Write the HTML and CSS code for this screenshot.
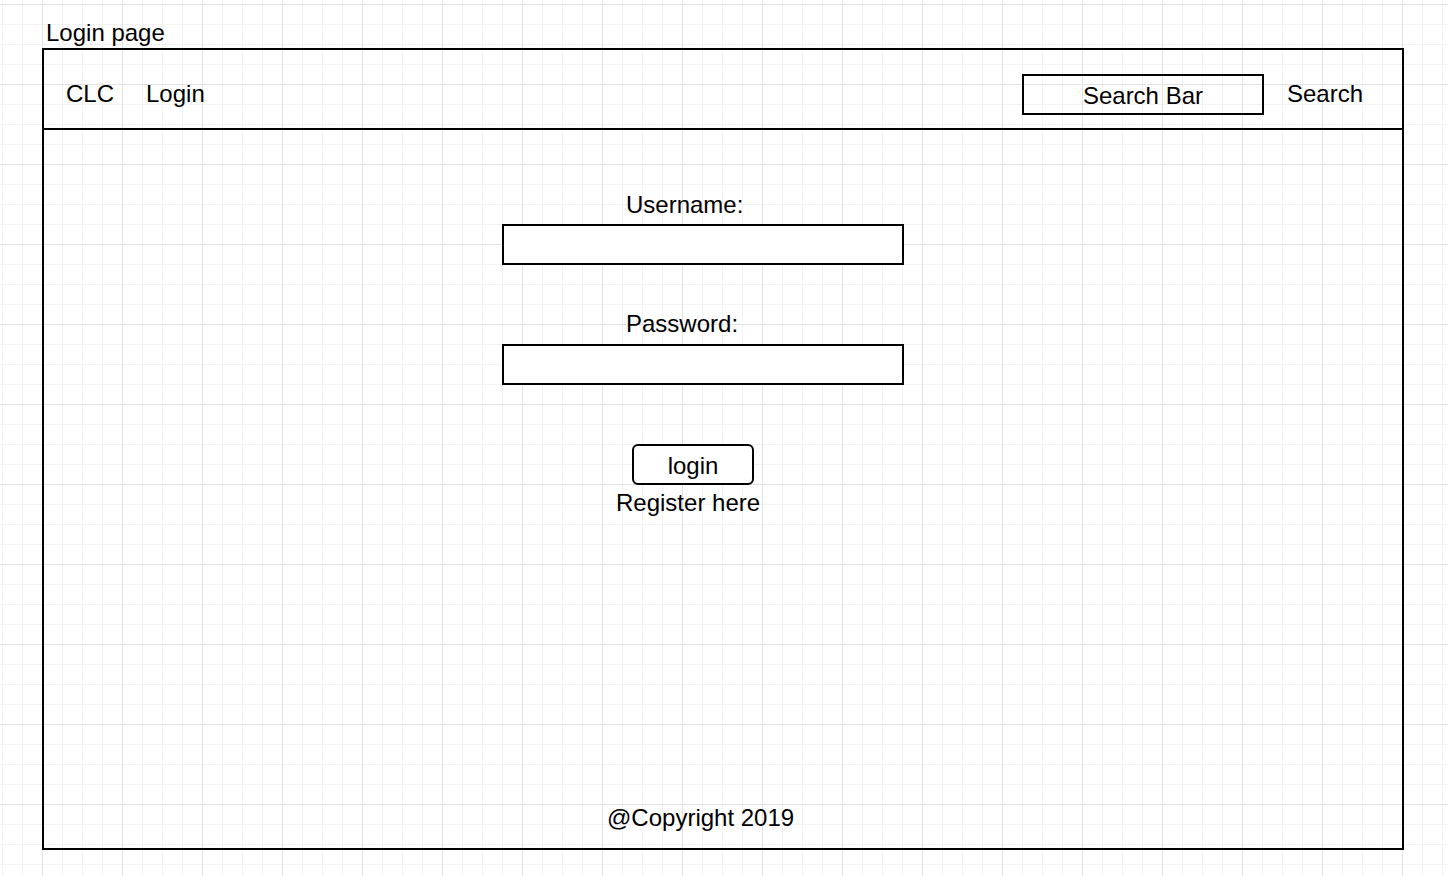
FILE: index.html
```html
<!DOCTYPE html>
<html lang="en">
<head>
<meta charset="utf-8">
<title>Login page</title>
<link rel="stylesheet" href="styles.css">
</head>
<body>
<div class="page">
  <div class="page-title">Login page</div>
  <div class="frame">
    <header class="topbar">
      <span class="brand">CLC</span>
      <span class="nav-link">Login</span>
      <div class="search-bar">Search Bar</div>
      <span class="search-link">Search</span>
    </header>
    <main class="content">
      <div class="field-label">Username:</div>
      <div class="field-box"></div>
      <div class="field-label field-label-second">Password:</div>
      <div class="field-box field-box-second"></div>
      <div class="login-button">login</div>
      <div class="register">Register here</div>
    </main>
    <footer class="footer">@Copyright 2019</footer>
  </div>
</div>
</body>
</html>
```

FILE: styles.css
```css
html, body {
  margin: 0;
  padding: 0;
}

body {
  width: 1448px;
  height: 876px;
  overflow: hidden;
  font-family: "Liberation Sans", Arial, Helvetica, sans-serif;
  font-size: 24px;
  line-height: 28px;
  color: #000;
  background-color: #ffffff;
  background-image:
    linear-gradient(to right, #e2e2e2 1px, transparent 1px),
    linear-gradient(to bottom, #e2e2e2 1px, transparent 1px),
    linear-gradient(to right, #f3f3f3 1px, transparent 1px),
    linear-gradient(to bottom, #f3f3f3 1px, transparent 1px);
  background-size: 80px 80px, 80px 80px, 20px 20px, 20px 20px;
  background-position: 42px 4px, 42px 4px, 2px 4px, 2px 4px;
}

.page {
  padding: 19px 0 0 42px;
}

.page-title {
  height: 28px;
  margin: 0 0 1px 4px;
  white-space: nowrap;
}

.frame {
  box-sizing: border-box;
  width: 1362px;
  height: 802px;
  border: 2px solid #000;
  display: flex;
  flex-direction: column;
}

.topbar {
  box-sizing: border-box;
  height: 80px;
  border-bottom: 2px solid #000;
  display: flex;
  align-items: flex-start;
  padding: 30px 39px 0 22px;
}

.brand {
  white-space: nowrap;
}

.nav-link {
  margin-left: 32px;
  white-space: nowrap;
}

.search-bar {
  box-sizing: border-box;
  margin-left: auto;
  margin-top: -6px;
  width: 242px;
  height: 41px;
  border: 2px solid #000;
  padding-top: 6px;
  text-align: center;
  white-space: nowrap;
}

.search-link {
  margin-left: 23px;
  white-space: nowrap;
}

.content {
  flex: 1;
  display: flex;
  flex-direction: column;
  align-items: flex-start;
  padding: 61px 0 0 458px;
}

.field-label {
  margin-left: 124px;
  white-space: nowrap;
}

.field-label-second {
  margin-top: 45px;
}

.field-box {
  box-sizing: border-box;
  margin-top: 5px;
  width: 402px;
  height: 41px;
  border: 2px solid #000;
  background: #fff;
}

.field-box-second {
  margin-top: 6px;
}

.login-button {
  box-sizing: border-box;
  margin: 59px 0 0 130px;
  width: 122px;
  height: 41px;
  border: 2px solid #000;
  border-radius: 6px;
  background: #fff;
  padding-top: 6px;
  text-align: center;
}

.register {
  margin: 4px 0 0 114px;
  white-space: nowrap;
}

.footer {
  padding: 0 0 16px 563px;
  white-space: nowrap;
}
```
